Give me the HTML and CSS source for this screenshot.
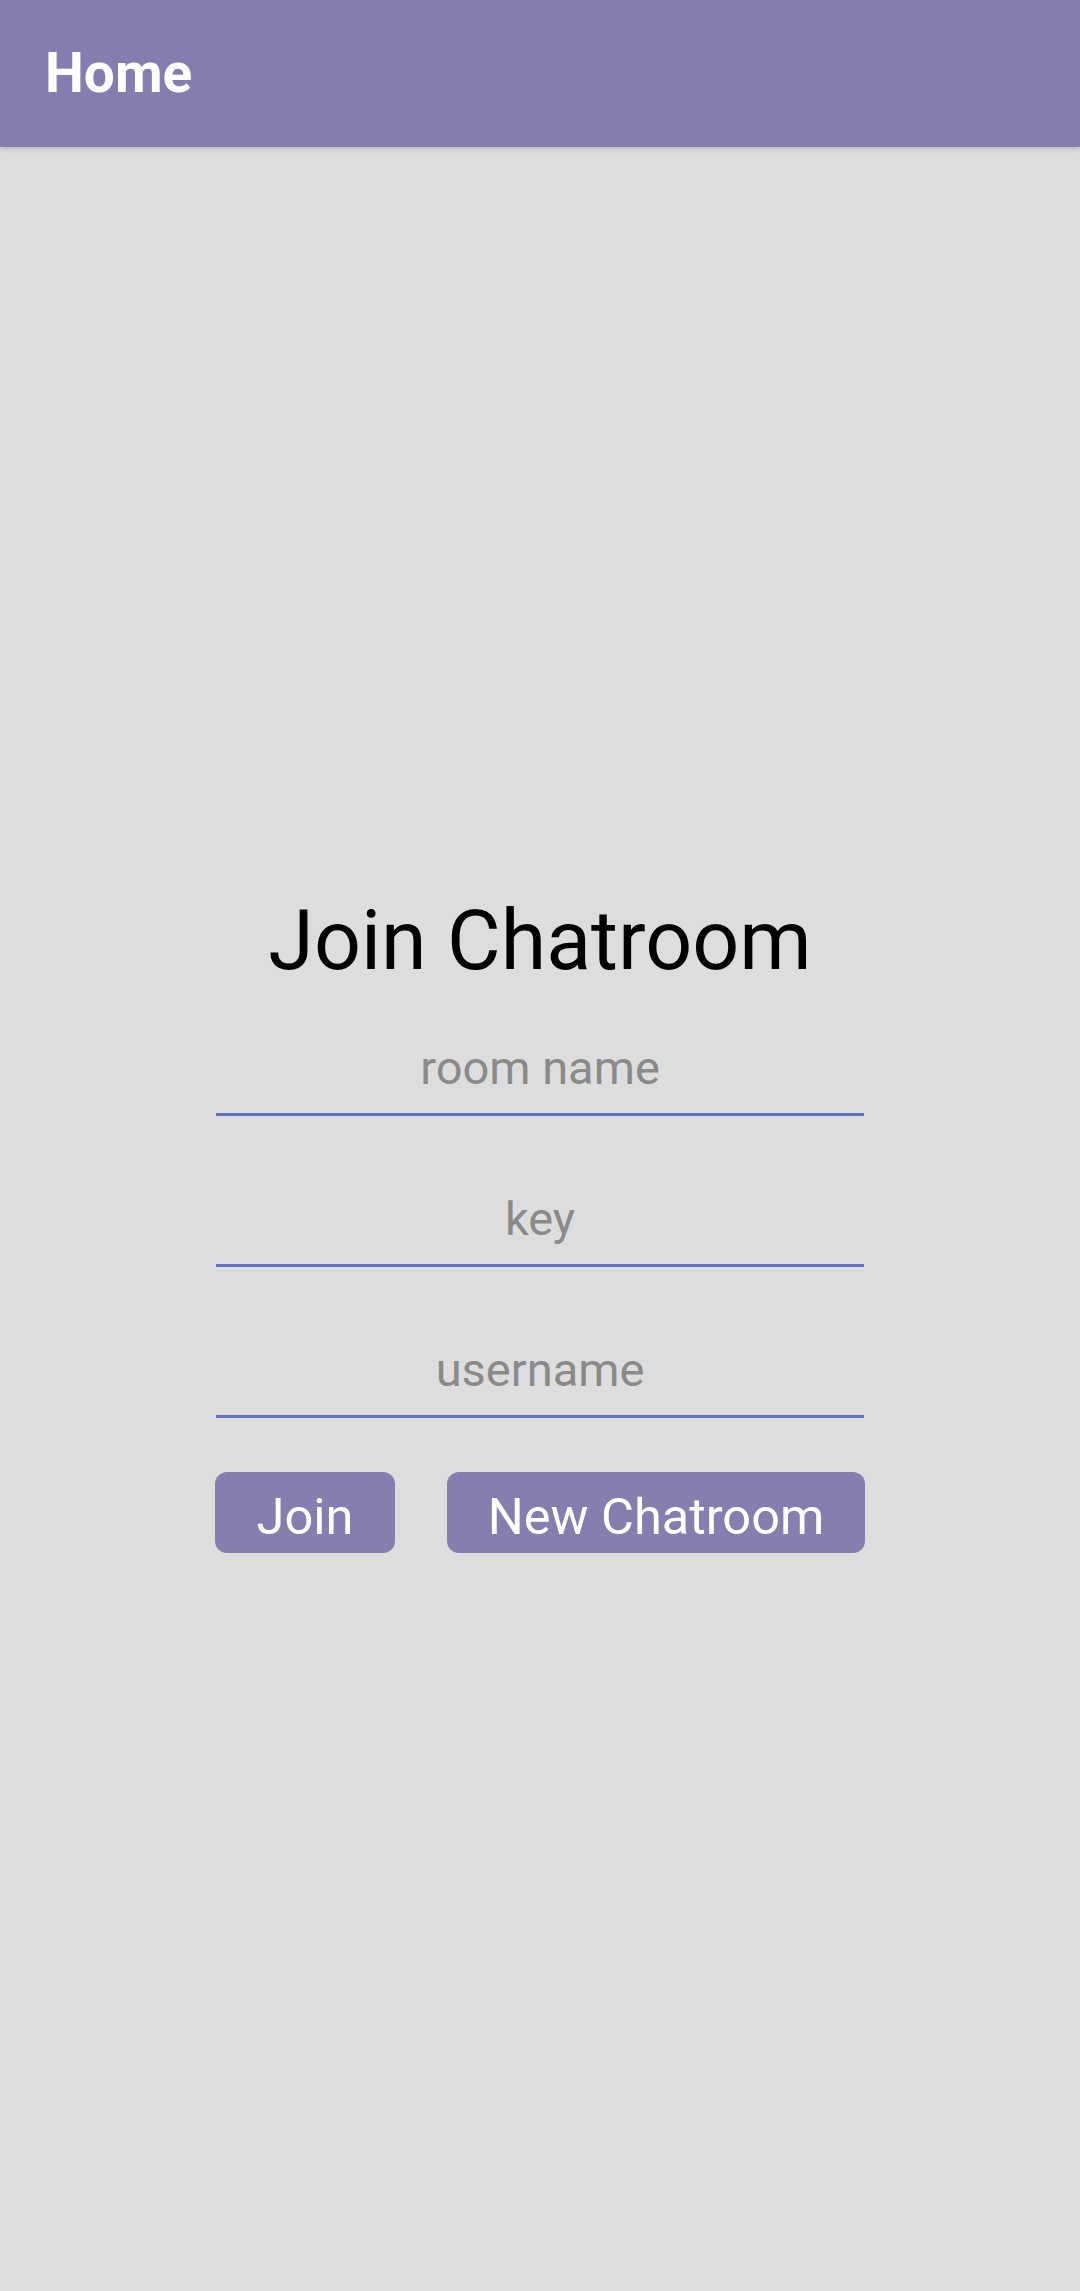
FILE: index.html
```html
<!DOCTYPE html>
<html>
<head>
<meta charset="utf-8">
<link rel="stylesheet" href="styles.css">
</head>
<body>
<header class="appbar"><span class="appbar-title">Home</span></header>
<main class="content">
  <h1 class="title">Join Chatroom</h1>
  <div class="field">room name</div>
  <div class="field">key</div>
  <div class="field">username</div>
  <div class="actions">
    <button class="btn btn-join">Join</button>
    <button class="btn btn-new">New Chatroom</button>
  </div>
</main>
</body>
</html>
```
FILE: styles.css
```css
html, body {
  margin: 0;
  padding: 0;
}
body {
  width: 1080px;
  height: 2291px;
  background: #dddddd;
  font-family: Roboto, "Noto Sans", sans-serif;
  overflow: hidden;
}
.appbar {
  height: 147px;
  background: #847db0;
  box-shadow: 0 2px 5px rgba(0, 0, 0, 0.18);
  display: flex;
  align-items: center;
  padding-left: 45px;
  position: relative;
  z-index: 1;
}
.appbar-title {
  color: #ffffff;
  font-weight: 700;
  font-size: 55px;
  line-height: 147px;
}
.content {
  display: flex;
  flex-direction: column;
  align-items: center;
  padding-top: 745px;
}
.title {
  margin: 0;
  font-weight: 400;
  font-size: 82.5px;
  line-height: 97px;
  color: #000000;
}
.field {
  width: 648px;
  margin-top: 74px;
  font-size: 47px;
  line-height: 58px;
  text-align: center;
  color: #8a8a8a;
  padding-bottom: 16px;
  border-bottom: 3px solid #6272c6;
}
.title + .field {
  margin-top: 50px;
}
.actions {
  display: flex;
  gap: 52px;
  margin-top: 54px;
}
.btn {
  height: 81px;
  border: none;
  border-radius: 12px;
  background: #857fb0;
  color: #ffffff;
  font-family: Roboto, "Noto Sans", sans-serif;
  font-size: 50.5px;
  line-height: 75px;
  padding: 7px 0 0 0;
  box-sizing: border-box;
  text-align: center;
}
.btn-join {
  width: 180px;
}
.btn-new {
  width: 418px;
}
```
